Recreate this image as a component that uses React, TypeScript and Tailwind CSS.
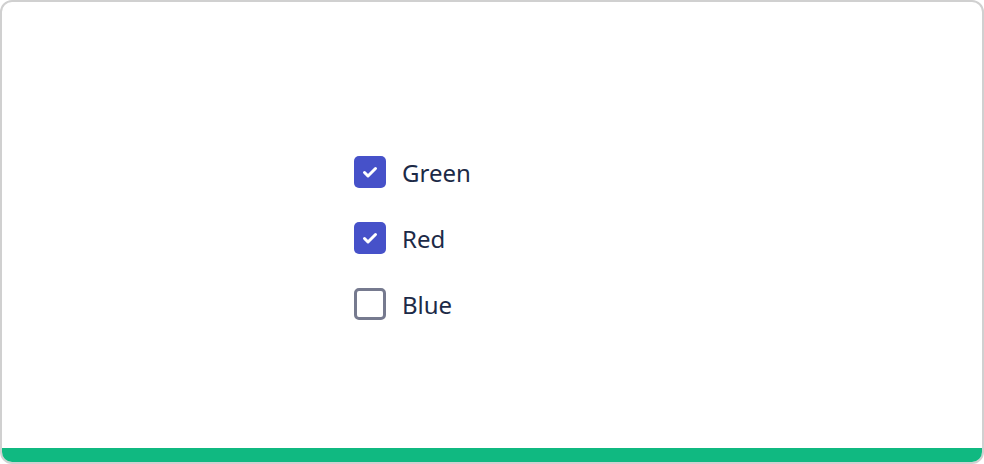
import React from "react";

function Check({ checked }: { checked: boolean }) {
  if (checked) {
    return (
      <div className="w-8 h-8 rounded-[5px] bg-[#4651c9] shrink-0">
        <svg width="32" height="32" viewBox="0 0 32 32" fill="none">
          <path d="M10.5 16.5 L14 20 L21.5 12.5" stroke="white" strokeWidth="3" strokeLinecap="round" strokeLinejoin="round" />
        </svg>
      </div>
    );
  }
  return <div className="w-8 h-8 rounded-[5px] border-[3px] border-[#767a8f] bg-white shrink-0" />;
}

export default function App() {
  const items = [
    { label: "Green", checked: true },
    { label: "Red", checked: true },
    { label: "Blue", checked: false },
  ];
  return (
    <div
      className="w-[984px] h-[464px] bg-white"
      style={{ fontFamily: '"Noto Sans", "Open Sans", sans-serif' }}
    >
      <div className="w-full h-full border-2 border-[#d0d0d0] rounded-[12px] overflow-hidden flex flex-col">
        <div className="flex-1 pl-[352px] pt-[154px] flex flex-col gap-[34px]">
          {items.map((it) => (
            <label key={it.label} className="flex items-center gap-4 h-8">
              <Check checked={it.checked} />
              <span className="text-[24px] text-[#1c2a47] leading-none pt-[2px]">{it.label}</span>
            </label>
          ))}
        </div>
        <div className="h-[14px] bg-[#10b981]" />
      </div>
    </div>
  );
}
